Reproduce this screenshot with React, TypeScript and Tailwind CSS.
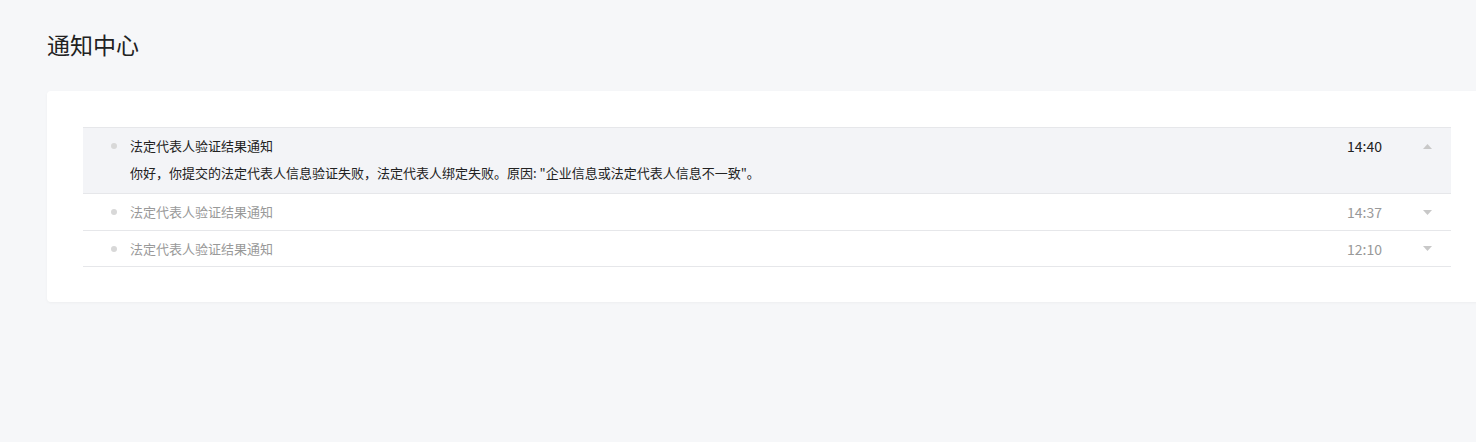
import React from "react";

const font = { fontFamily: '"Noto Sans CJK SC", "Liberation Sans", sans-serif' };

type Item = { title: string; time: string; body?: string; open?: boolean };

const items: Item[] = [
  {
    title: "法定代表人验证结果通知",
    time: "14:40",
    body: '你好，你提交的法定代表人信息验证失败，法定代表人绑定失败。原因: "企业信息或法定代表人信息不一致"。',
    open: true,
  },
  { title: "法定代表人验证结果通知", time: "14:37" },
  { title: "法定代表人验证结果通知", time: "12:10" },
];

function Caret({ up }: { up?: boolean }) {
  return (
    <svg width="9" height="5" viewBox="0 0 9 5" className="block">
      {up ? <path d="M0 5 L4.5 0 L9 5 Z" fill="#c8c8c8" /> : <path d="M0 0 L4.5 5 L9 0 Z" fill="#c8c8c8" />}
    </svg>
  );
}

export default function App() {
  return (
    <div className="min-h-[442px] w-[1476px] overflow-hidden bg-[#f6f7f9]" style={font}>
      <div className="pl-[47px] pt-[27px]">
        <h1 className="text-[23px] leading-[34px] text-[#222] font-normal">通知中心</h1>
        <div className="mt-[30px] w-[1440px] rounded-[4px] bg-white px-[36px] pt-[36px] pb-[35px] shadow-[0_1px_3px_rgba(0,0,0,0.04)]">
          <div className="border-t border-[#e6e7ea]">
            {items.map((it, i) => (
              <div
                key={i}
                className={`border-b border-[#e6e7ea] ${it.open ? "bg-[#f3f4f7]" : "bg-white"}`}
              >
                <div className={`flex items-center ${i === 2 ? "h-[35px]" : "h-[36px]"}`}>
                  <div className="ml-[28px] h-[6px] w-[6px] rounded-full bg-[#d8d8d8]" />
                  <div
                    className={`ml-[13px] flex-1 text-[13px] leading-[18px] ${
                      it.open ? "text-[#222]" : "text-[#999]"
                    }`}
                  >
                    {it.title}
                  </div>
                  <div
                    className={`text-[14px] leading-[18px] ${it.open ? "text-[#222]" : "text-[#999]"}`}
                  >
                    {it.time}
                  </div>
                  <div className="ml-[41px] mr-[19px] flex w-[9px] justify-center">
                    <Caret up={it.open} />
                  </div>
                </div>
                {it.open && it.body && (
                  <div className="pb-[11px] pl-[47px] text-[13px] leading-[18px] text-[#222]">
                    {it.body}
                  </div>
                )}
              </div>
            ))}
          </div>
        </div>
      </div>
    </div>
  );
}
